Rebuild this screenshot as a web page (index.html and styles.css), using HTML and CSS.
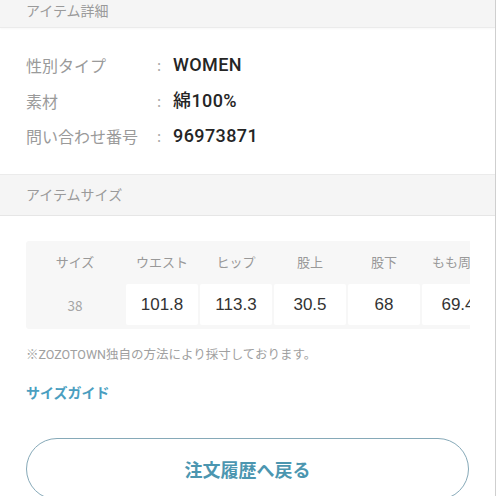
FILE: index.html
```html
<!DOCTYPE html>
<html lang="ja">
<head>
<meta charset="utf-8">
<link rel="stylesheet" href="styles.css">
</head>
<body>
<div class="page">
  <div class="bar bar-top"><span class="bar-text">アイテム詳細</span></div>
  <div class="details">
    <div class="label">性別タイプ</div><div class="colon">:</div><div class="value">WOMEN</div>
    <div class="label">素材</div><div class="colon">:</div><div class="value">綿100%</div>
    <div class="label">問い合わせ番号</div><div class="colon">:</div><div class="value">96973871</div>
  </div>
  <div class="bar bar-size">アイテムサイズ</div>
  <div class="table-wrap">
    <div class="size-table">
      <div class="th">サイズ</div>
      <div class="th">ウエスト</div>
      <div class="th">ヒップ</div>
      <div class="th">股上</div>
      <div class="th">股下</div>
      <div class="th">もも周り</div>
      <div class="th">裾幅</div>
      <div class="td first">38</div>
      <div class="td">101.8</div>
      <div class="td">113.3</div>
      <div class="td">30.5</div>
      <div class="td">68</div>
      <div class="td">69.4</div>
      <div class="td">23.0</div>
    </div>
  </div>
  <p class="note">※ZOZOTOWN独自の方法により採寸しております。</p>
  <a class="guide">サイズガイド</a>
  <div class="btn">注文履歴へ戻る</div>
</div>
</body>
</html>
```

FILE: styles.css
```css
html, body {
  margin: 0;
  padding: 0;
  background: #fff;
  font-family: "Noto Sans CJK JP", "Noto Sans", sans-serif;
  overflow: hidden;
}
.page {
  width: 495px;
  height: 496px;
  border-right: 1px solid #cfcfcf;
  overflow: hidden;
}
.bar {
  background: #f5f5f5;
  color: #9a9a9a;
  font-size: 14px;
  padding: 0 26px;
}
.bar-top {
  height: 27px;
  border-bottom: 1px solid #ebebeb;
  box-shadow: 0 1px 2px rgba(0,0,0,0.03);
}
.bar-text {
  display: block;
  line-height: 20px;
}
.details {
  display: grid;
  grid-template-columns: 131px 16px 1fr;
  row-gap: 11.5px;
  padding: 25px 26px 26px;
  line-height: 24px;
}
.label {
  color: #9a9a9a;
  font-size: 16px;
}
.colon {
  color: #aaa;
  font-size: 15px;
}
.value {
  color: #252525;
  font-family: Roboto, "Noto Sans CJK JP", sans-serif;
  font-size: 18px;
  font-weight: 500;
  letter-spacing: 0.4px;
}
.bar-size {
  height: 40px;
  line-height: 38px;
  border-top: 1px solid #ebebeb;
  border-bottom: 1px solid #e6e6e6;
}
.table-wrap {
  margin: 25px 26px 0;
  width: 444px;
  overflow: hidden;
}
.size-table {
  display: grid;
  grid-template-columns: 98px repeat(6, 72px);
  grid-template-rows: 41px 41px;
  gap: 2px;
  padding-bottom: 4px;
  background: #f7f7f7;
  width: max-content;
  border-radius: 3px;
}
.th {
  display: flex;
  align-items: center;
  justify-content: center;
  color: #999;
  font-size: 13px;
}
.td {
  display: flex;
  align-items: center;
  justify-content: center;
  background: #fff;
  color: #333;
  font-family: "Liberation Sans", "Noto Sans CJK JP", sans-serif;
  font-size: 17px;
  border-radius: 2px;
}
.td.first {
  background: #f7f7f7;
  color: #a5a5a5;
  font-family: "Noto Sans CJK JP", sans-serif;
  font-size: 13.5px;
}
.note {
  margin: 17px 26px 0;
  font-family: Roboto, "Noto Sans CJK JP", sans-serif;
  font-size: 12.5px;
  line-height: 18px;
  color: #a0a0a0;
}
.guide {
  display: block;
  margin: 18px 26px 0;
  font-size: 14px;
  line-height: 20px;
  font-weight: 700;
  color: #4a9ec0;
}
.btn {
  margin: 36px 26px 0;
  height: 62px;
  border: 1px solid #86a9b8;
  border-radius: 31px;
  box-sizing: border-box;
  display: flex;
  align-items: center;
  justify-content: center;
  color: #4c96b0;
  font-size: 18px;
  font-weight: 700;
}
```
